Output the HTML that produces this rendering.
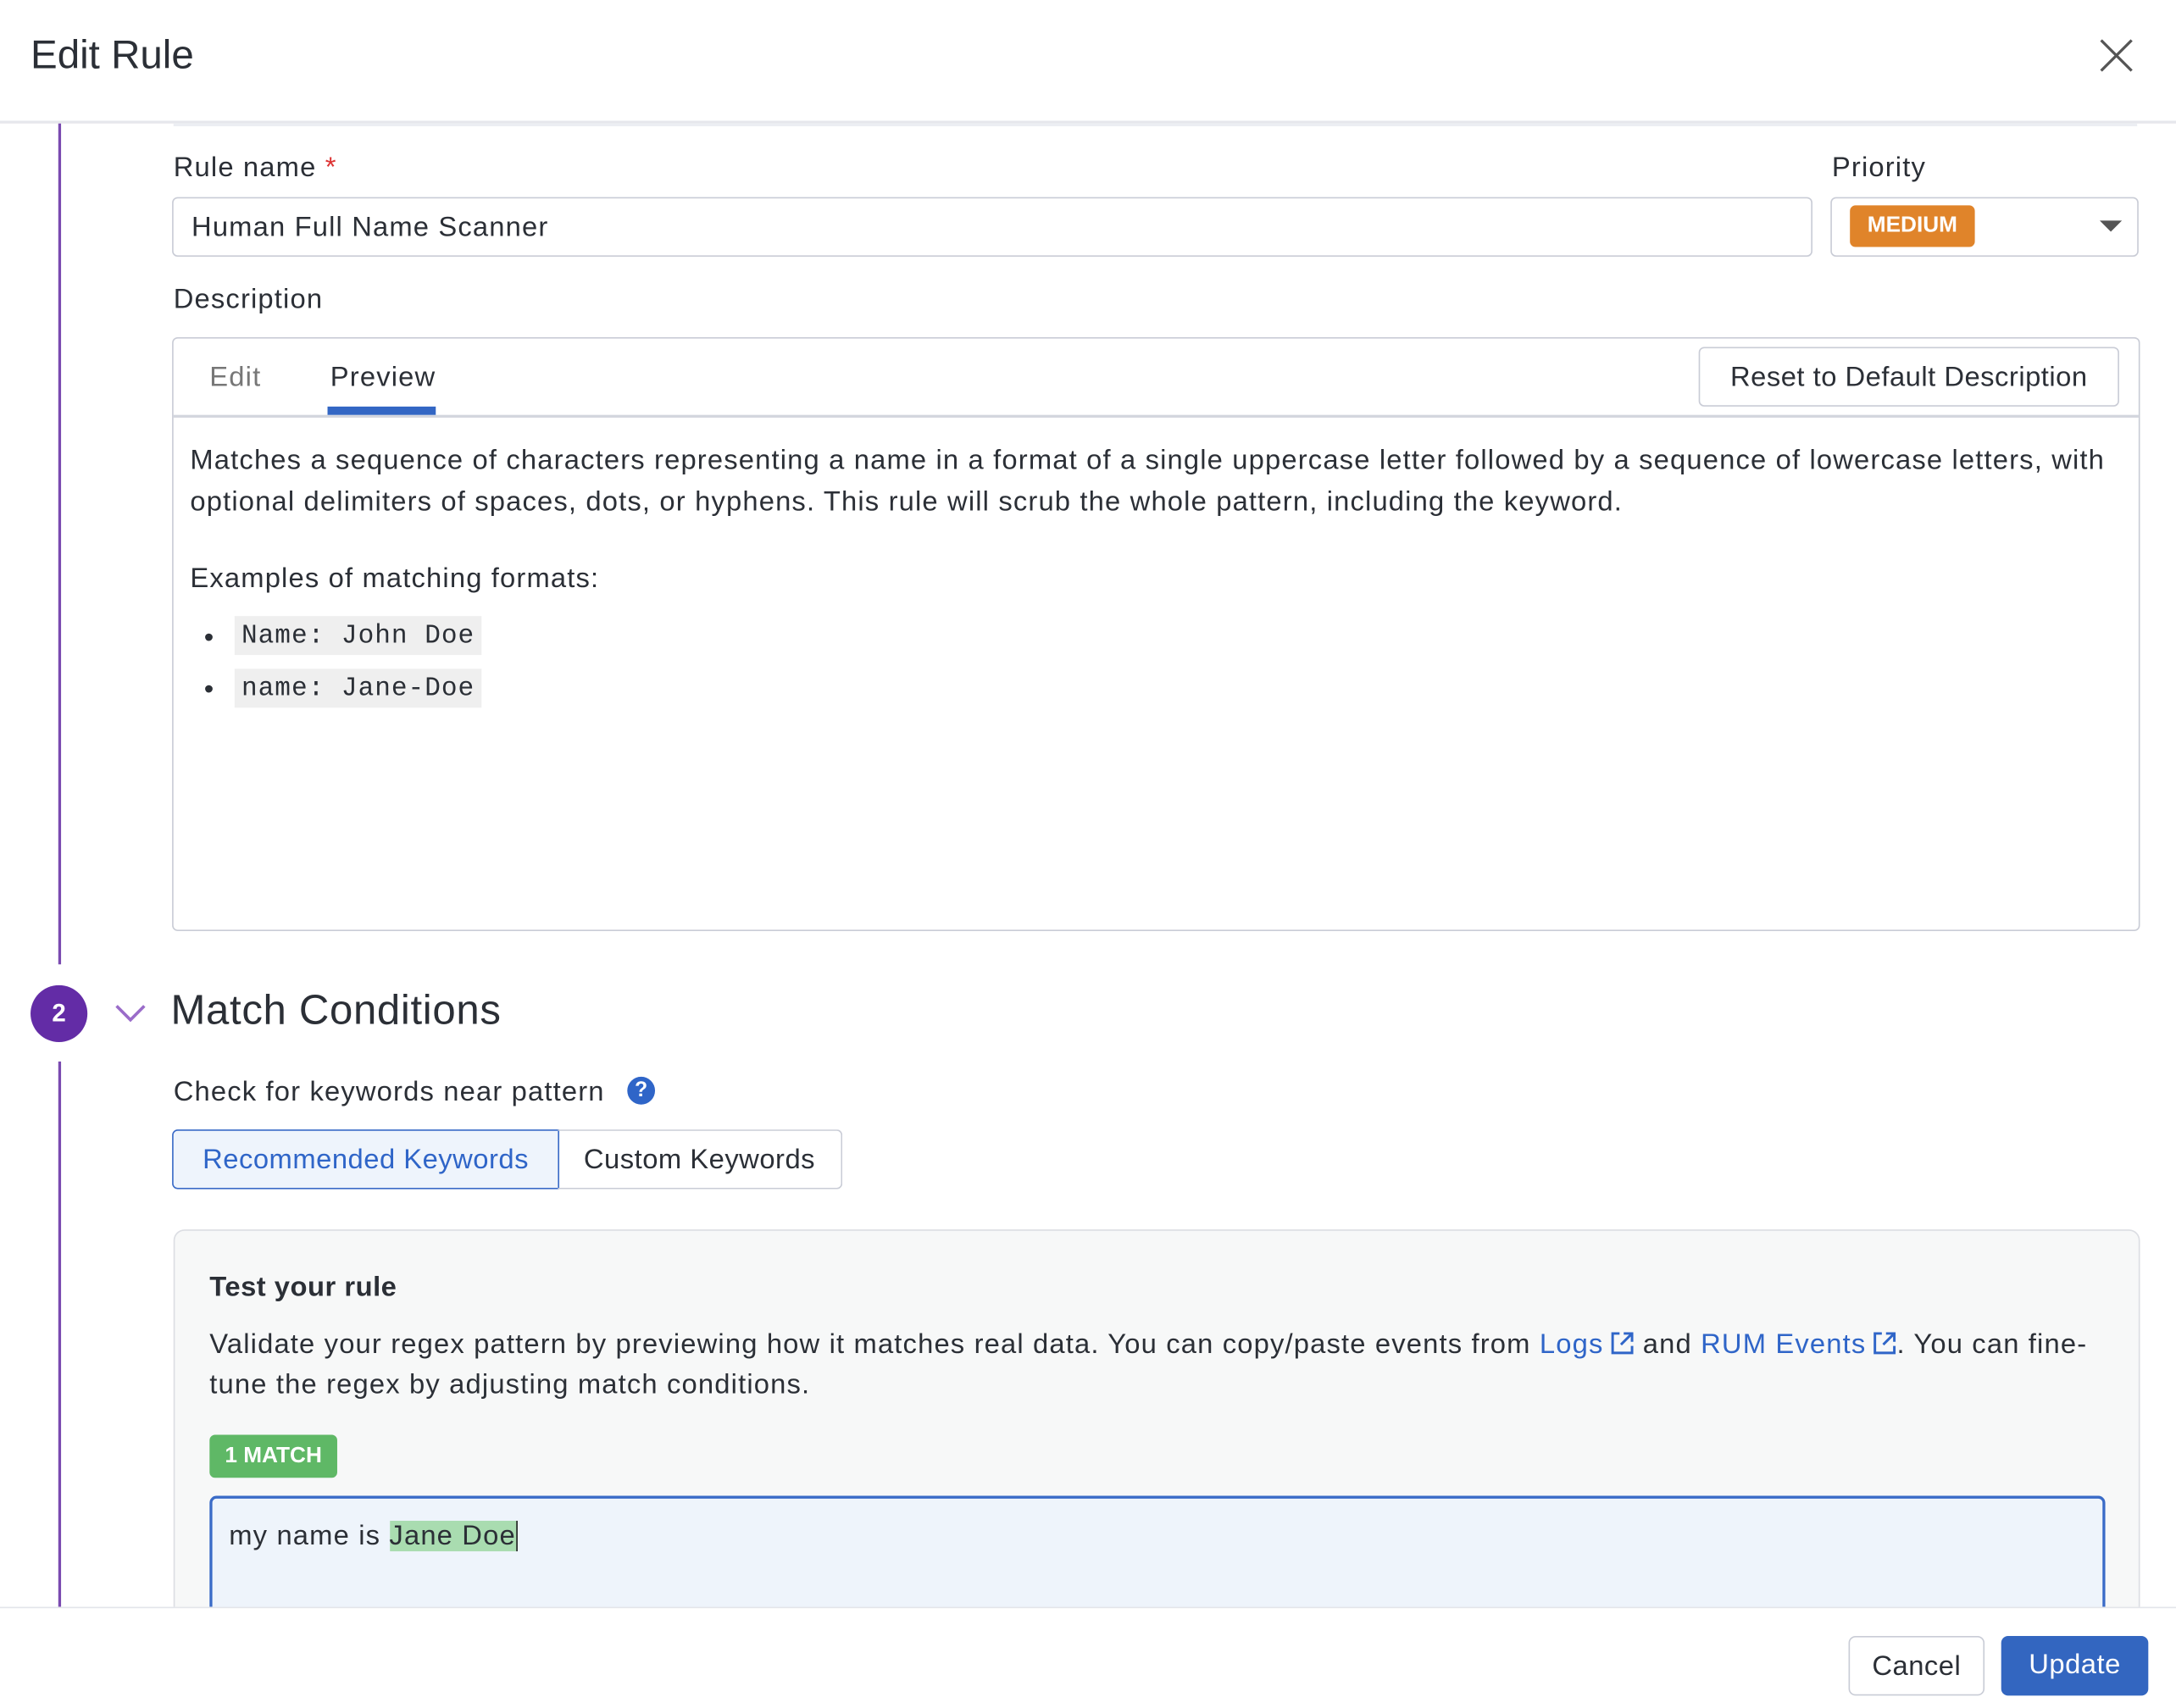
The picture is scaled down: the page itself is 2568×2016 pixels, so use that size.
<!DOCTYPE html>
<html><head><meta charset="utf-8"><style>
html,body{margin:0;padding:0;width:2568px;height:2016px;overflow:hidden;background:#fff}
#w{position:absolute;left:0;top:0;width:1568px;height:1231px;transform:scale(1.6378);transform-origin:0 0;font-family:"Liberation Sans",sans-serif;color:#2b2f36}
.a{position:absolute;white-space:nowrap}
.t20{font-size:20px;letter-spacing:0.7px}
.box{position:absolute;box-sizing:border-box}
.mono{font-family:"Liberation Mono",monospace;font-size:19px;background:#efefef;padding:3px 5px;letter-spacing:0.6px}
.link{color:#2f65c8}
.ext{display:inline-block;vertical-align:-2px;margin-left:4px}
</style></head><body><div id="w">
<div class="a" style="left:22px;top:24px;font-size:29px;color:#2b2f36">Edit Rule</div>
<svg class="a" style="left:1513px;top:28px" width="24" height="24" viewBox="0 0 24 24"><path d="M1 1L23 23M23 1L1 23" stroke="#555" stroke-width="2" fill="none"/></svg>
<div class="box" style="left:0;top:87px;width:1568px;height:2px;background:#e6e7ec"></div>
<div class="box" style="left:125px;top:89px;width:1415px;height:2px;background:#eceef3"></div>
<div class="box" style="left:42px;top:89px;width:2px;height:606px;background:#7a4ab0"></div>
<div class="box" style="left:42px;top:765px;width:2px;height:393px;background:#7a4ab0"></div>

<div class="a t20" style="left:125px;top:110px">Rule name <span style="color:#d33">*</span></div>
<div class="box" style="left:124px;top:142px;width:1182px;height:43px;border:1.5px solid #c9ccd6;border-radius:4px"></div>
<div class="a t20" style="left:138px;top:153px">Human Full Name Scanner</div>
<div class="a t20" style="left:1320px;top:110px">Priority</div>
<div class="box" style="left:1319px;top:142px;width:222px;height:43px;border:1.5px solid #c9ccd6;border-radius:4px"></div>
<div class="box" style="left:1333px;top:148px;width:90px;height:30px;background:#e0842a;border-radius:4px;color:#fff;font-weight:bold;font-size:16px;text-align:center;line-height:30px">MEDIUM</div>
<div class="a" style="left:1513px;top:159px;width:0;height:0;border-left:8px solid transparent;border-right:8px solid transparent;border-top:8px solid #555"></div>

<div class="a t20" style="left:125px;top:205px">Description</div>
<div class="box" style="left:124px;top:243px;width:1418px;height:428px;border:1.5px solid #c9ccd6;border-radius:4px"></div>
<div class="box" style="left:125px;top:299px;width:1416px;height:2px;background:#d3d6de"></div>
<div class="a t20" style="left:151px;top:261px;color:#777">Edit</div>
<div class="a t20" style="left:238px;top:261px">Preview</div>
<div class="box" style="left:236px;top:293px;width:78px;height:6px;background:#3366c4"></div>
<div class="box t20" style="left:1224px;top:250px;width:303px;height:43px;border:1.5px solid #c9ccd6;border-radius:4px;text-align:center;line-height:43px;letter-spacing:0.3px">Reset to Default Description</div>
<div class="a t20" style="left:137px;top:317px;line-height:30px">Matches a sequence of characters representing a name in a format of a single uppercase letter followed by a sequence of lowercase letters, with<br>optional delimiters of spaces, dots, or hyphens. This rule will scrub the whole pattern, including the keyword.</div>
<div class="a t20" style="left:137px;top:406px">Examples of matching formats:</div>
<div class="a t20" style="left:147px;top:449px">•</div>
<div class="a t20" style="left:147px;top:486px">•</div>
<div class="a" style="left:169px;top:447px"><span class="mono">Name: John Doe</span></div>
<div class="a" style="left:169px;top:485px"><span class="mono">name: Jane-Doe</span></div>

<div class="box" style="left:22px;top:710px;width:41px;height:41px;border-radius:50%;background:#632ca6;color:#fff;font-weight:bold;font-size:18px;text-align:center;line-height:41px">2</div>
<svg class="a" style="left:82px;top:722px" width="24" height="16" viewBox="0 0 24 16"><path d="M2 3L12 13L22 3" stroke="#9a6cc9" stroke-width="2.2" fill="none"/></svg>
<div class="a" style="left:123px;top:712px;font-size:30px;letter-spacing:0.4px">Match Conditions</div>
<div class="a t20" style="left:125px;top:776px">Check for keywords near pattern</div>
<div class="box" style="left:452px;top:776px;width:20px;height:20px;border-radius:50%;background:#2f65c8;color:#fff;font-weight:bold;font-size:15px;text-align:center;line-height:20px">?</div>
<div class="box t20" style="left:124px;top:814px;width:279px;height:43px;border:1.5px solid #3a6bc7;border-radius:4px 0 0 4px;background:#eef4fc;color:#2f65c8;text-align:center;line-height:43px;letter-spacing:0.3px">Recommended Keywords</div>
<div class="box t20" style="left:402px;top:814px;width:205px;height:43px;border:1.5px solid #c9ccd6;border-left:none;border-radius:0 4px 4px 0;text-align:center;line-height:43px;letter-spacing:0.3px">Custom Keywords</div>

<div class="box" style="left:125px;top:886px;width:1417px;height:300px;border:1.5px solid #dcdee3;border-radius:8px;background:#f7f8f8"></div>
<div class="a t20" style="left:151px;top:917px;font-weight:bold;letter-spacing:0.3px">Test your rule</div>
<div class="a t20" style="left:151px;top:955px;line-height:29px">Validate your regex pattern by previewing how it matches real data. You can copy/paste events from <span class="link">Logs<svg class="ext" width="18" height="18" viewBox="0 0 18 18"><path d="M7 2H2V16H16V11M10 2H16V8M16 2L8 10" stroke="#2f65c8" stroke-width="1.8" fill="none"/></svg></span> and <span class="link">RUM Events<svg class="ext" width="18" height="18" viewBox="0 0 18 18"><path d="M7 2H2V16H16V11M10 2H16V8M16 2L8 10" stroke="#2f65c8" stroke-width="1.8" fill="none"/></svg></span>. You can fine-<br>tune the regex by adjusting match conditions.</div>
<div class="box" style="left:151px;top:1034px;width:92px;height:31px;border-radius:4px;background:#5fb866;color:#fff;font-weight:bold;font-size:16px;text-align:center;line-height:31px">1 MATCH</div>
<div class="box" style="left:151px;top:1078px;width:1366px;height:110px;border:2px solid #3a6bc7;border-radius:5px;background:#eef4fb"></div>
<div class="a t20" style="left:165px;top:1096px">my name is <span style="background:#a9dcb0;border-right:1.5px solid #222">Jane Doe</span></div>

<div class="box" style="left:0;top:1158px;width:1568px;height:73px;background:#fff;border-top:1.5px solid #e3e5ea"></div>
<div class="box t20" style="left:1332px;top:1179px;width:98px;height:43px;border:1.5px solid #c9ccd6;border-radius:5px;text-align:center;line-height:43px;background:#fff;letter-spacing:0.3px">Cancel</div>
<div class="box t20" style="left:1442px;top:1179px;width:106px;height:43px;border-radius:5px;background:#3366c0;color:#fff;text-align:center;line-height:43px;letter-spacing:0.3px">Update</div>
</div></body></html>
